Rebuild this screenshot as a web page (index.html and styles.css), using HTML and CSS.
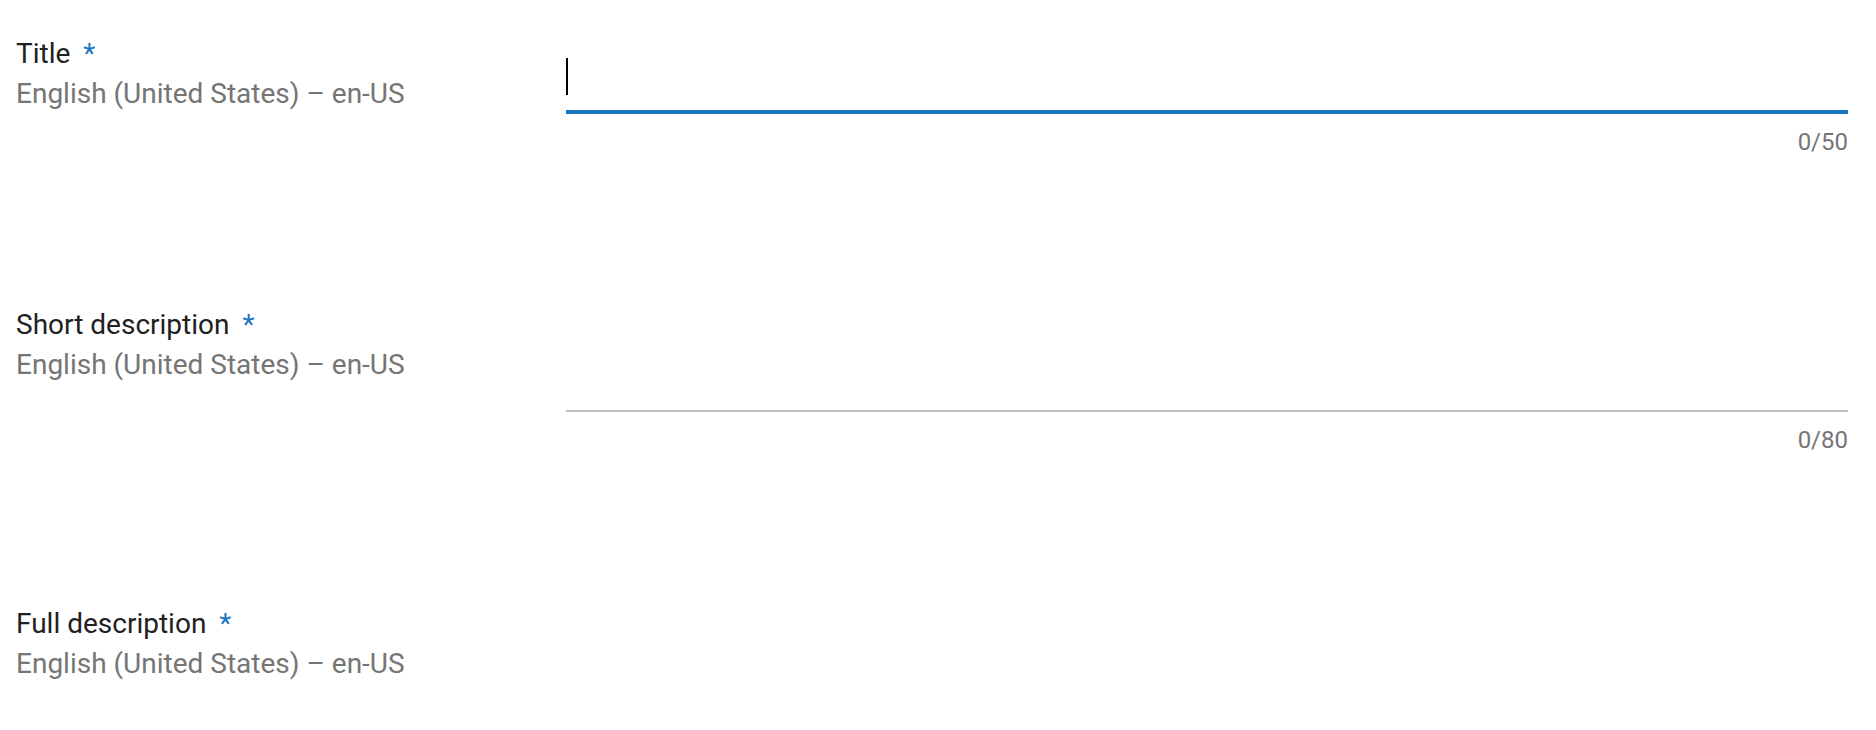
FILE: index.html
```html
<!DOCTYPE html>
<html lang="en">
<head>
    <meta charset="UTF-8">
    <meta name="viewport" content="width=device-width, initial-scale=1.0">
    <title>Store listing</title>
    <link rel="stylesheet" href="styles.css">
</head>
<body>

<div class="listing">
    <div class="field field-title">
        <div class="field-label">
            <div class="label-name">Title <span class="required">*</span></div>
            <div class="label-lang">English (United States) – en-US</div>
        </div>
        <div class="field-input">
            <div class="text-box focused"><span class="caret"></span></div>
            <div class="counter">0/50</div>
        </div>
    </div>

    <div class="field field-short">
        <div class="field-label">
            <div class="label-name">Short description <span class="required">*</span></div>
            <div class="label-lang">English (United States) – en-US</div>
        </div>
        <div class="field-input">
            <div class="text-box"></div>
            <div class="counter">0/80</div>
        </div>
    </div>

    <div class="field field-full">
        <div class="field-label">
            <div class="label-name">Full description <span class="required">*</span></div>
            <div class="label-lang">English (United States) – en-US</div>
        </div>
        <div class="field-input">
            <div class="text-box multiline"></div>
            <div class="counter">0/4000</div>
        </div>
    </div>
</div>

</body>
</html>
```

FILE: styles.css
```css
body {
    font-family: Roboto, "Noto Sans", Arial, sans-serif;
    margin: 0;
    padding: 0;
    background-color: #fff;
    color: #212121;
    overflow: hidden;
    height: 730px;
}
.listing {
    padding: 34px 28px 0 16px;
}
.field {
    display: grid;
    grid-template-columns: 550px 1fr;
    align-items: start;
}
.field-title {
    height: 271px;
}
.field-short {
    height: 299px;
}
.label-name {
    font-size: 28px;
    line-height: 40px;
    color: #212121;
}
.required {
    color: #1976c2;
    margin-left: 6px;
}
.label-lang {
    font-size: 28px;
    line-height: 40px;
    color: #757575;
}
.text-box {
    position: relative;
    height: 60px;
    margin-top: 45px;
    border-bottom: 2px solid #bdbdbd;
}
.field-title .text-box {
    height: 76px;
    margin-top: 0;
}
.text-box.focused {
    border-bottom: 4px solid #1677c2;
}
.text-box.multiline {
    height: 200px;
}
.caret {
    position: absolute;
    left: 0;
    top: 24px;
    width: 2px;
    height: 37px;
    background-color: #000;
}
.counter {
    text-align: right;
    font-size: 24px;
    line-height: 32px;
    color: #757575;
    margin-top: 12px;
}
```
